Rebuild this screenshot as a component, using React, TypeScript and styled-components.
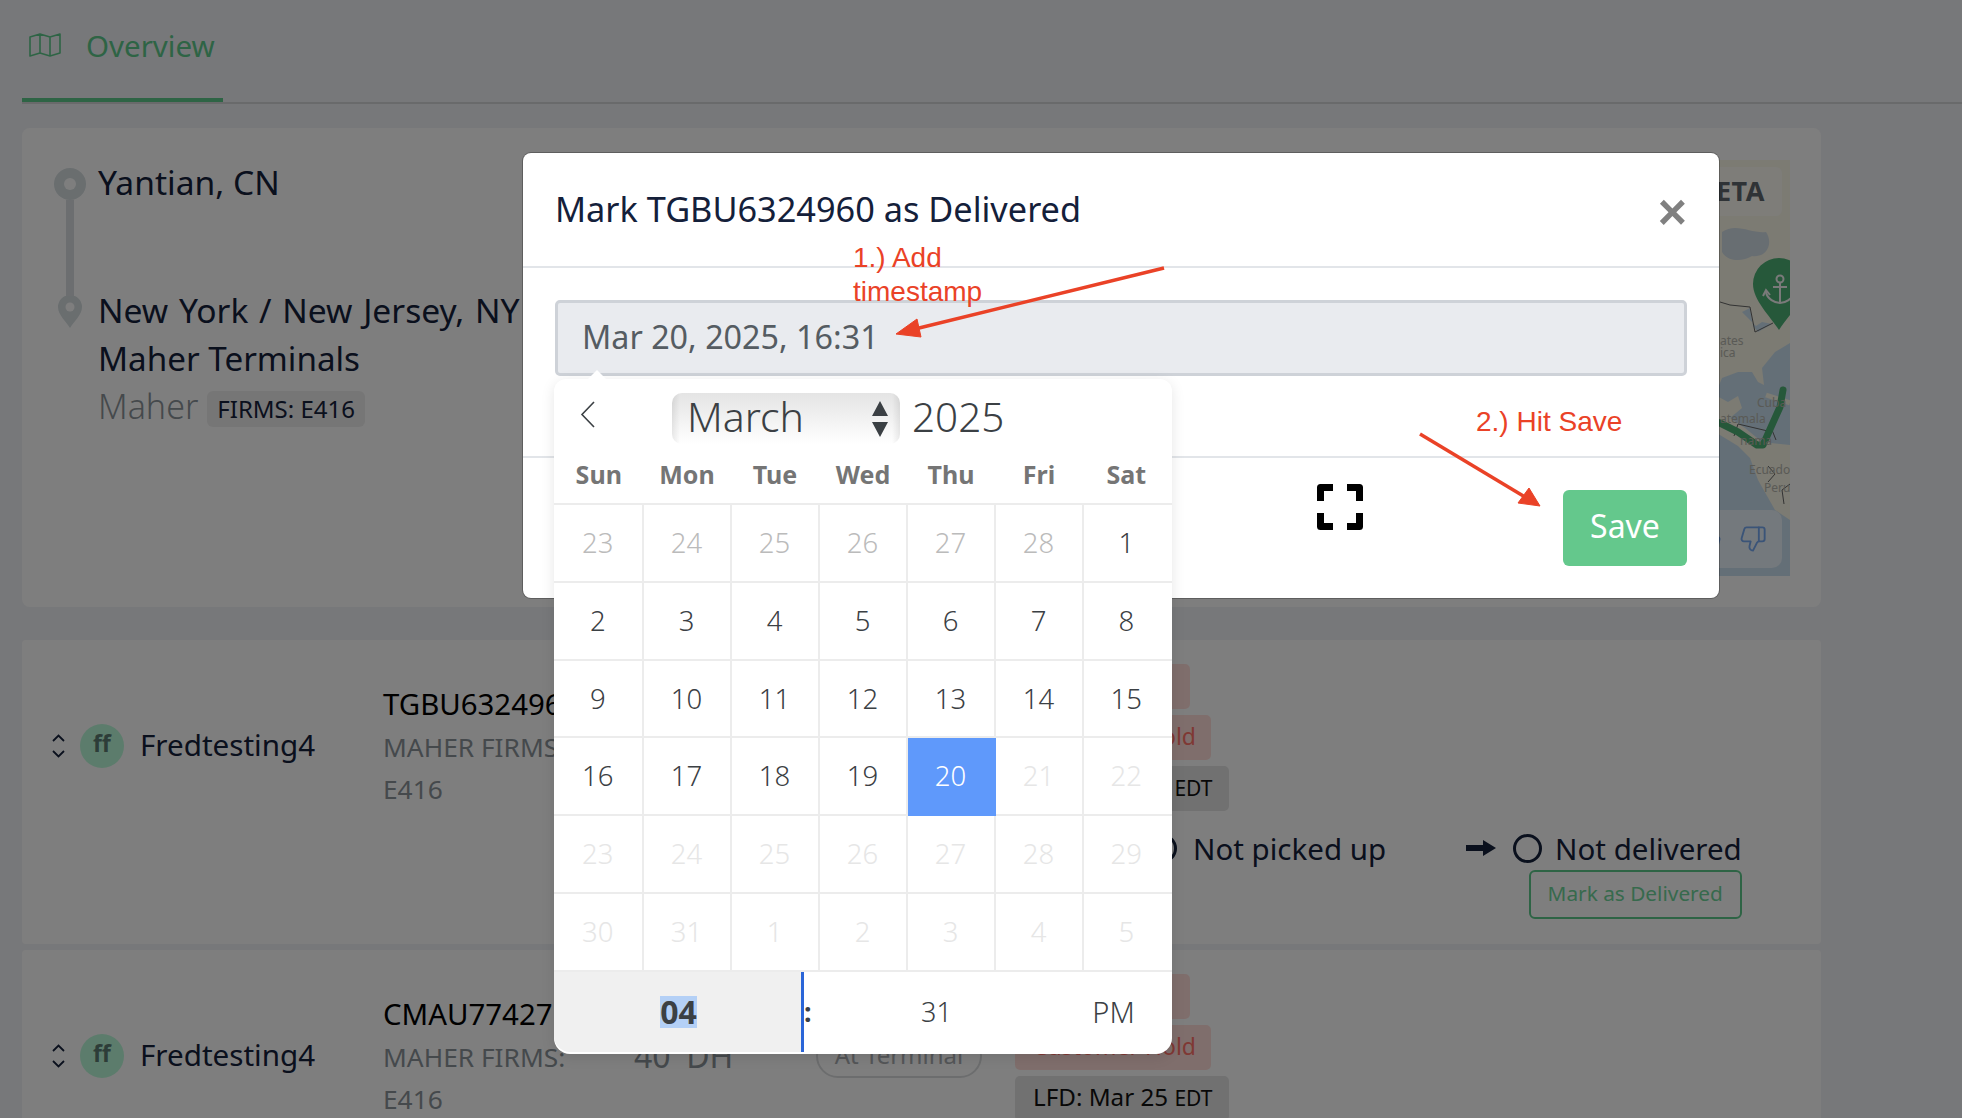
import React from 'react';
import styled, { createGlobalStyle } from 'styled-components';
import { ThumbsDown, ThumbsUp } from 'lucide-react';

const GlobalStyle = createGlobalStyle`
  html, body {
    margin: 0;
    padding: 0;
    overflow: hidden;
    font-family: "Noto Sans", "Open Sans", sans-serif;
  }
  * { box-sizing: border-box; }
`;

const Page = styled.div`
  position: relative;
  width: 1962px;
  height: 1118px;
  overflow: hidden;
  background: #eff1f4;
  color: #14203a;
`;

const Backdrop = styled.div`
  position: absolute;
  inset: 0;
  background: rgba(0, 0, 0, 0.5);
`;

const TabBar = styled.div`
  display: flex;
  height: 104px;
  margin-left: 22px;
  border-bottom: 2px solid #d2d4d6;
`;

const Tab = styled.div`
  display: flex;
  align-items: center;
  gap: 25px;
  width: 201px;
  height: 102px;
  padding: 0 0 8px 7px;
  border-bottom: 4px solid #5cc88a;
  color: #5cc88a;
  font-size: 29.5px;
`;

const Content = styled.div`
  width: 1799px;
  margin-left: 22px;
  padding-top: 24px;
`;

const RouteCard = styled.section`
  display: flex;
  justify-content: space-between;
  height: 479px;
  padding: 32px 31px 0 32px;
  margin-bottom: 33px;
  background: #fdfdfd;
  border-radius: 8px;
`;

const Stops = styled.div`
  padding-top: 8px;
`;

const Stop = styled.div`
  display: flex;
  gap: 12px;
`;

const Marker = styled.div`
  display: flex;
  flex-direction: column;
  align-items: center;
  width: 32px;
`;

const RouteLine = styled.div`
  width: 8px;
  height: 96px;
  background: #d8dde0;
`;

const PortName = styled.div<{ $spaced?: boolean }>`
  white-space: nowrap;
  font-size: 33.6px;
  line-height: 28px;
  word-spacing: ${p => (p.$spaced ? 2 : 0)}px;
`;

const TerminalName = styled.div`
  margin-top: 20px;
  font-size: 33.2px;
  line-height: 30px;
`;

const Operator = styled.div`
  display: flex;
  align-items: flex-start;
  gap: 9px;
  margin-top: 13px;
  font-size: 34px;
  line-height: 38px;
  font-weight: 300;
  color: #8a9298;
`;

const FirmsChip = styled.span`
  margin-top: 4px;
  padding: 0 10px;
  height: 36px;
  line-height: 36px;
  font-size: 24px;
  font-weight: 400;
  color: #14203a;
  background: #ececec;
  border-radius: 6px;
`;

const MapBox = styled.div`
  position: relative;
  width: 400px;
  height: 416px;
  overflow: hidden;
`;

const MapArt = styled.svg`
  display: block;
`;

const EtaBadge = styled.div`
  position: absolute;
  top: 7px;
  right: 8px;
  width: 200px;
  height: 49px;
  padding-right: 17px;
  text-align: right;
  font-size: 27px;
  line-height: 48px;
  font-weight: 700;
  letter-spacing: 0.5px;
  color: #5e666c;
  background: rgba(255, 255, 255, 0.5);
  border-radius: 6px;
`;

const FeedbackBar = styled.div`
  position: absolute;
  right: 8px;
  bottom: 8px;
  display: flex;
  align-items: center;
  justify-content: flex-end;
  gap: 17px;
  width: 200px;
  height: 58px;
  padding-right: 15px;
  color: #75a8f0;
  background: rgba(245, 250, 255, 0.7);
  border-radius: 10px;
`;

const RowCard = styled.section`
  display: grid;
  grid-template-columns: 361px 251px 182px 199px 1fr;
  height: 304px;
  padding-top: 24px;
  margin-bottom: 6px;
  background: #fdfdfd;
  border-radius: 4px;
`;

const Lead = styled.div`
  display: flex;
  align-items: flex-start;
  padding: 60px 0 0 30px;
`;

const Sorter = styled.svg`
  margin-top: 10px;
  margin-right: 15px;
`;

const Avatar = styled.div`
  width: 44px;
  height: 44px;
  margin-right: 16px;
  text-align: center;
  font-size: 23px;
  line-height: 38px;
  font-weight: 700;
  color: #5a7a70;
  background: #b9f8d8;
  border-radius: 50%;
`;

const Owner = styled.div`
  font-size: 29.6px;
  line-height: 41px;
`;

const Container = styled.div`
  width: 210px;
  padding-top: 19px;
  font-size: 26.3px;
  line-height: 42.5px;
  color: #8a9298;
`;

const ContainerNumber = styled.div`
  white-space: nowrap;
  font-size: 29.4px;
  color: #000;
`;

const SizeLabel = styled.div`
  padding-top: 60px;
  font-size: 32px;
  line-height: 44px;
  color: #8a9298;
`;

const PillCell = styled.div`
  padding-top: 60px;
`;

const Pill = styled.div`
  width: 166px;
  height: 44px;
  text-align: center;
  font-size: 24px;
  line-height: 38px;
  color: #a8acb0;
  border: 2.5px solid #d8dadc;
  border-radius: 22px;
`;

const Chips = styled.div`
  display: flex;
  flex-direction: column;
  align-items: flex-start;
  gap: 6px;
`;

const Chip = styled.div<{ $tone: 'red' | 'grey'; $width: number }>`
  width: ${p => p.$width}px;
  height: 45px;
  padding-left: 18px;
  white-space: nowrap;
  font-size: ${p => (p.$tone === 'red' ? 23 : 24.2)}px;
  line-height: 42px;
  color: ${p => (p.$tone === 'red' ? '#ff7068' : '#111')};
  background: ${p => (p.$tone === 'red' ? '#ffddd9' : '#e2e2e2')};
  border-radius: 5px;
`;

const ChipNote = styled.span`
  font-size: 21px;
`;

const Progress = styled.div`
  display: flex;
  align-items: flex-start;
  margin-top: 17px;
  padding-left: 133px;
`;

const StatusBlock = styled.div`
  display: flex;
  flex-direction: column;
  align-items: flex-end;
`;

const Status = styled.div<{ $gap: number }>`
  display: flex;
  align-items: center;
  gap: ${p => p.$gap}px;
  height: 40px;
  white-space: nowrap;
  font-size: 29.5px;
`;

const Ring = styled.span`
  display: block;
  width: 29px;
  height: 29px;
  margin-top: 1px;
  border: 3px solid #14203a;
  border-radius: 50%;
`;

const StepArrow = styled.svg`
  margin: 12px 17px 0 80px;
`;

const MarkButton = styled.button`
  width: 213px;
  height: 49px;
  margin-top: 2px;
  padding: 0 0 3px;
  font-family: inherit;
  font-size: 20.8px;
  color: #6ed49a;
  background: transparent;
  border: 2.5px solid #5cc88a;
  border-radius: 6px;
`;

const Modal = styled.div`
  position: absolute;
  top: 153px;
  left: 523px;
  width: 1196px;
  height: 445px;
  background: #fff;
  border-radius: 8px;
  box-shadow: 0 0 0 1px rgba(0, 0, 0, 0.25);
`;

const ModalHeader = styled.header`
  display: flex;
  align-items: center;
  justify-content: space-between;
  height: 115px;
  padding: 0 32px;
  border-bottom: 2px solid #e2e5e9;
`;

const ModalTitle = styled.h2`
  margin: 0 0 2px;
  white-space: nowrap;
  font-size: 34.3px;
  font-weight: 400;
  color: #14203a;
`;

const CloseButton = styled.button`
  margin-top: 4px;
  padding: 0;
  font-family: "Liberation Sans", sans-serif;
  font-size: 50px;
  line-height: 40px;
  font-weight: 700;
  color: #808080;
  background: none;
  border: 0;
`;

const ModalBody = styled.div`
  height: 188px;
  padding: 32px 32px 0;
`;

const DateInput = styled.div`
  height: 76px;
  padding-left: 24px;
  font-size: 32.3px;
  line-height: 66px;
  color: #555c62;
  background: #e9ebef;
  border: 3px solid #ced2d8;
  border-radius: 5px;
`;

const ModalFooter = styled.footer`
  display: flex;
  justify-content: flex-end;
  gap: 200px;
  padding: 26px 32px 0;
  border-top: 2px solid #e2e5e9;
`;

const SaveButton = styled.button`
  width: 124px;
  height: 76px;
  margin-top: 6px;
  padding: 0 0 5px;
  font-family: inherit;
  font-size: 32px;
  color: #fff;
  background: #64c88c;
  border: 0;
  border-radius: 6px;
`;

const Calendar = styled.div`
  position: absolute;
  top: 226px;
  left: 31px;
  width: 618px;
  height: 675px;
  background: #fff;
  border-radius: 12px 12px 16px 16px;
  box-shadow: 0 3px 14px rgba(0, 0, 0, 0.1);

  &::before {
    content: '';
    position: absolute;
    top: -9px;
    left: 34px;
    border: 9px solid transparent;
    border-top: 0;
    border-bottom-color: #fff;
  }
`;

const MonthBar = styled.div`
  display: flex;
  align-items: center;
  height: 51px;
  margin-top: 14px;
  padding-left: 26px;
`;

const PrevMonth = styled.svg`
  margin-right: 77px;
  margin-top: -9px;
`;

const MonthSelect = styled.div`
  display: flex;
  align-items: center;
  justify-content: space-between;
  width: 228px;
  height: 51px;
  padding: 0 11px 0 15px;
  margin-right: 12px;
  font-size: 41px;
  line-height: 43px;
  font-weight: 300;
  color: #3b4044;
  background:
    linear-gradient(to right, rgba(0, 0, 0, 0.08), transparent 8px, transparent calc(100% - 8px), rgba(0, 0, 0, 0.08)),
    linear-gradient(to bottom, #e4e4e4, #fff);
  border-radius: 10px;
`;

const MonthName = styled.span`
  height: 47px;
`;

const YearLabel = styled.span`
  height: 47px;
  font-size: 40.4px;
  line-height: 43px;
  font-weight: 300;
  color: #3b4044;
`;

const columnSizes = '89.5px repeat(5, 88px) 88.5px';

const Weekdays = styled.div`
  display: grid;
  grid-template-columns: ${columnSizes};
  height: 59px;
`;

const Weekday = styled.div`
  text-align: center;
  font-size: 25px;
  line-height: 60px;
  font-weight: 700;
  color: #757575;

  &:nth-child(n + 2) {
    padding-right: 1px;
  }
  &:nth-child(7) {
    padding-right: 3px;
  }
`;

const DayGrid = styled.div`
  display: grid;
  grid-template-columns: ${columnSizes};
  grid-auto-rows: 77.8px;
  border-top: 2px solid #ececec;
`;

const Day = styled.div<{ $kind: 'normal' | 'muted' | 'disabled' | 'selected' }>`
  text-align: center;
  font-size: 27.5px;
  line-height: 76px;
  font-weight: 300;
  color: ${p =>
    p.$kind === 'selected' ? '#fff' : p.$kind === 'muted' ? '#bbb' : p.$kind === 'disabled' ? '#e6e6e6' : '#3b4044'};
  background: ${p => (p.$kind === 'selected' ? '#5f99fb' : 'transparent')};
  border-right: 2px solid ${p => (p.$kind === 'selected' ? 'transparent' : '#ececec')};
  border-bottom: 2px solid ${p => (p.$kind === 'selected' ? 'transparent' : '#ececec')};

  &:nth-child(7n) {
    padding-right: 3px;
    border-right: 0;
  }
`;

const TimeRow = styled.div`
  display: flex;
  align-items: center;
  height: 80px;
  font-size: 27px;
  color: #3b4044;
`;

const HourCell = styled.div`
  display: flex;
  align-items: center;
  justify-content: center;
  width: 250px;
  height: 100%;
  padding-left: 2px;
  background: #f0f0f0;
  border-right: 3px solid #2a65d8;
  border-bottom-left-radius: 16px;
`;

const HourText = styled.span`
  height: 32px;
  line-height: 31px;
  font-size: 32px;
  font-weight: 700;
  background: #b4d0f6;
`;

const TimeColon = styled.span`
  width: 12px;
  font-weight: 700;
`;

const MinuteCell = styled.span`
  width: 241px;
  text-align: center;
  font-weight: 300;
`;

const PeriodCell = styled.span`
  width: 113px;
  text-align: center;
  font-size: 29px;
  font-weight: 300;
`;

const Annotations = styled.svg`
  position: absolute;
  inset: 0;
  pointer-events: none;
`;

const Note = styled.div<{ $top: number; $left: number }>`
  position: absolute;
  top: ${p => p.$top}px;
  left: ${p => p.$left}px;
  font-family: "Liberation Sans", sans-serif;
  font-size: 28px;
  line-height: 34px;
  color: #ea4227;
`;

const weekdays = ['Sun', 'Mon', 'Tue', 'Wed', 'Thu', 'Fri', 'Sat'];

type DayKind = 'normal' | 'muted' | 'disabled' | 'selected';

const days: { label: number; kind: DayKind }[] = [
  ...[23, 24, 25, 26, 27, 28].map(label => ({ label, kind: 'muted' as DayKind })),
  ...Array.from({ length: 19 }, (_, i) => ({ label: i + 1, kind: 'normal' as DayKind })),
  { label: 20, kind: 'selected' },
  ...[21, 22, 23, 24, 25, 26, 27, 28, 29, 30, 31, 1, 2, 3, 4, 5].map(label => ({
    label,
    kind: 'disabled' as DayKind,
  })),
];

const rows = [
  { id: 'TGBU6324960', first: 'Freight Hold' },
  { id: 'CMAU7742713', first: 'Freight Hold' },
];

const RouteMap = () => (
  <MapArt width="400" height="416" viewBox="1390 160 400 416">
    <rect x="1390" y="160" width="400" height="416" fill="#c9dfee" />
    <path
      d="M1390 160 H1790 V343 L1775 352 L1762 368 L1764 385 L1758 382 L1752 372 L1738 372 L1722 378 L1715 395 L1728 402 L1738 396 L1742 408 L1730 418 L1745 428 L1762 442 L1790 445 V520 L1775 510 L1758 480 L1750 458 L1738 446 L1715 432 L1690 420 H1390 Z"
      fill="#f8f6e6"
    />
    <path d="M1722 232 C1736 222 1752 234 1766 232 C1774 244 1766 258 1752 256 C1742 262 1728 262 1722 252 Z" fill="#d0dce4" />
    <path d="M1742 312 L1750 308 L1753 326 L1758 332 L1772 324 L1762 322 L1756 326 Z" fill="#c9dfee" />
    <path d="M1720 302 L1730 305 L1750 307 L1755 332 L1773 323" fill="none" stroke="#666" strokeWidth="1" />
    <path
      d="M1772 432 L1738 424 L1734 436 M1776 440 L1772 430 M1768 466 L1775 474 L1768 482 M1790 484 L1782 490 L1784 504"
      fill="none"
      stroke="#666"
      strokeWidth="1"
    />
    <path d="M1766 395 L1790 403" fill="none" stroke="#f8f6e6" strokeWidth="5" />
    <path
      d="M1690 412 L1720 423 L1738 432 L1757 445 L1763 445 L1780 407 L1783 390"
      fill="none"
      stroke="#4cb074"
      strokeWidth="7"
      strokeLinecap="round"
      strokeLinejoin="round"
    />
    <path d="M1779 330 C1770 316 1753 300 1753 284 A26 26 0 0 1 1805 284 C1805 300 1788 316 1779 330 Z" fill="#4cb074" />
    <g fill="none" stroke="#f4f4f4" strokeWidth="2">
      <circle cx="1780" cy="279" r="3.5" />
      <path d="M1780 283 V303 M1773 287 H1787 M1766 292 C1767 299 1775 303 1780 303 C1785 303 1793 299 1794 292" />
      <path d="M1763 296 L1766 290 L1770 295" />
    </g>
    <g fontSize="12" fill="#b4b4ac" fontFamily="Noto Sans, sans-serif">
      <text x="1720" y="345">ates</text>
      <text x="1720" y="357">ica</text>
      <text x="1757" y="407">Cuba</text>
      <text x="1720" y="423">atemala</text>
      <text x="1740" y="445">nama</text>
      <text x="1749" y="474">Ecuador</text>
      <text x="1764" y="492">Peru</text>
    </g>
  </MapArt>
);

const ContainerRow = ({ id, first }: { id: string; first: string }) => (
  <RowCard>
    <Lead>
      <Sorter width="13" height="24" viewBox="0 0 13 24" fill="none" stroke="#14203a" strokeWidth="1.8">
        <path d="M1 7 L6.5 1.5 L12 7 M1 17 L6.5 22.5 L12 17" />
      </Sorter>
      <Avatar>ff</Avatar>
      <Owner>Fredtesting4</Owner>
    </Lead>
    <Container>
      <ContainerNumber>{id}</ContainerNumber>
      MAHER FIRMS: E416
    </Container>
    <SizeLabel>40' DH</SizeLabel>
    <PillCell>
      <Pill>At Terminal</Pill>
    </PillCell>
    <div>
      <Chips>
        <Chip $tone="red" $width={175}>{first}</Chip>
        <Chip $tone="red" $width={196}>Customer Hold</Chip>
        <Chip $tone="grey" $width={214}>
          LFD: Mar 25 <ChipNote>EDT</ChipNote>
        </Chip>
      </Chips>
      <Progress>
        <Status $gap={16}>
          <Ring />
          Not picked up
        </Status>
        <StepArrow width="30" height="16" viewBox="0 0 30 16" fill="#14203a">
          <path d="M0 5 H17 V0 L30 8 L17 16 V11 H0 Z" />
        </StepArrow>
        <StatusBlock>
          <Status $gap={13}>
            <Ring />
            Not delivered
          </Status>
          <MarkButton>Mark as Delivered</MarkButton>
        </StatusBlock>
      </Progress>
    </div>
  </RowCard>
);

const DatePopup = () => (
  <Calendar>
    <MonthBar>
      <PrevMonth width="15" height="27" viewBox="0 0 15 27" fill="none" stroke="#3b4044" strokeWidth="1.6">
        <path d="M14 1 L2 13.5 L14 26" />
      </PrevMonth>
      <MonthSelect>
        <MonthName>March</MonthName>
        <svg width="18" height="36" viewBox="0 0 18 36" fill="#3b4044">
          <path d="M9 0 L17 15 H1 Z M9 36 L1 21 H17 Z" />
        </svg>
      </MonthSelect>
      <YearLabel>2025</YearLabel>
    </MonthBar>
    <Weekdays>
      {weekdays.map(name => (
        <Weekday key={name}>{name}</Weekday>
      ))}
    </Weekdays>
    <DayGrid>
      {days.map((day, index) => (
        <Day key={index} $kind={day.kind}>
          {day.label}
        </Day>
      ))}
    </DayGrid>
    <TimeRow>
      <HourCell>
        <HourText>04</HourText>
      </HourCell>
      <TimeColon>:</TimeColon>
      <MinuteCell>31</MinuteCell>
      <PeriodCell>PM</PeriodCell>
    </TimeRow>
  </Calendar>
);

const App = () => {
  return (
    <Page>
      <GlobalStyle />
      <TabBar>
        <Tab>
          <svg width="32" height="24" viewBox="0 0 32 24" fill="none" stroke="currentColor" strokeWidth="1.6" strokeLinejoin="round">
            <path d="M1 4 L11 1 L21 4 L31 1 V20 L21 23 L11 20 L1 23 Z M11 1 V20 M21 4 V23" />
          </svg>
          Overview
        </Tab>
      </TabBar>
      <Content>
        <RouteCard>
          <Stops>
            <Stop>
              <Marker>
                <svg width="32" height="32" viewBox="0 0 32 32">
                  <circle cx="16" cy="16" r="16" fill="#d4dcdf" />
                  <circle cx="16" cy="16" r="6" fill="#fdfdfd" />
                </svg>
                <RouteLine />
              </Marker>
              <PortName>Yantian, CN</PortName>
            </Stop>
            <Stop>
              <Marker>
                <svg width="24" height="32" viewBox="0 0 24 32">
                  <path d="M12 32 C8 25 0 19 0 11 A12 12 0 0 1 24 11 C24 19 16 25 12 32 Z" fill="#d4dcdf" />
                  <circle cx="12" cy="11" r="4.5" fill="#fdfdfd" />
                </svg>
              </Marker>
              <div>
                <PortName $spaced>New York / New Jersey, NY</PortName>
                <TerminalName>Maher Terminals</TerminalName>
                <Operator>
                  Maher <FirmsChip>FIRMS: E416</FirmsChip>
                </Operator>
              </div>
            </Stop>
          </Stops>
          <MapBox>
            <RouteMap />
            <EtaBadge>ETA</EtaBadge>
            <FeedbackBar>
              <ThumbsUp size={26} strokeWidth={1.6} />
              <ThumbsDown size={28} strokeWidth={1.6} />
            </FeedbackBar>
          </MapBox>
        </RouteCard>
        {rows.map(row => (
          <ContainerRow key={row.id} id={row.id} first={row.first} />
        ))}
      </Content>
      <Backdrop />
      <Modal>
        <ModalHeader>
          <ModalTitle>Mark TGBU6324960 as Delivered</ModalTitle>
          <CloseButton>×</CloseButton>
        </ModalHeader>
        <ModalBody>
          <DateInput>Mar 20, 2025, 16:31</DateInput>
        </ModalBody>
        <ModalFooter>
          <svg width="46" height="46" viewBox="0 0 46 46" fill="none" stroke="#000" strokeWidth="7" strokeLinejoin="round">
            <path d="M3.5 17 V3.5 H16 M30 3.5 H42.5 V17 M42.5 29 V42.5 H30 M16 42.5 H3.5 V29" />
          </svg>
          <SaveButton>Save</SaveButton>
        </ModalFooter>
        <DatePopup />
      </Modal>
      <Annotations width="1962" height="1118" viewBox="0 0 1962 1118">
        <g stroke="#ea4227" strokeWidth="3.5" fill="#ea4227">
          <path d="M1164 268 L915 329" />
          <path d="M896 334 L921 337 L917 319 Z" strokeWidth="1" />
          <path d="M1420 434 L1525 497" />
          <path d="M1540 506 L1518 503 L1529 488 Z" strokeWidth="1" />
        </g>
      </Annotations>
      <Note $top={241} $left={853}>
        1.) Add
        <br />
        timestamp
      </Note>
      <Note $top={405} $left={1476}>
        2.) Hit Save
      </Note>
    </Page>
  );
};

export default App;
